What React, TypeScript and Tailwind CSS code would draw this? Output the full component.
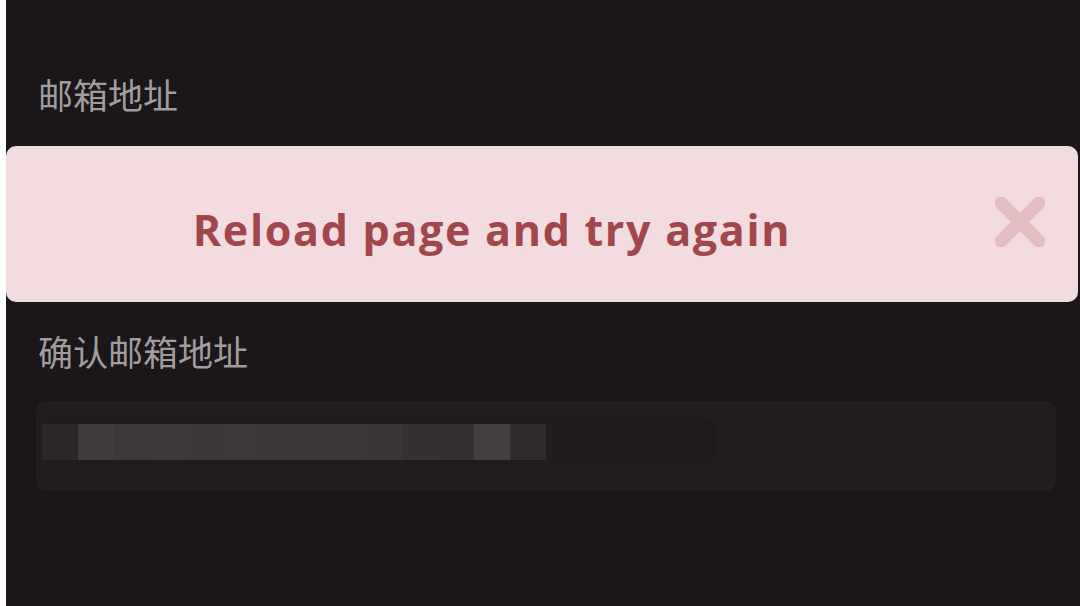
import React from 'react';

const cjk = { fontFamily: '"Noto Sans CJK SC", "Noto Sans", sans-serif' };

// pixelated (blurred) value inside the confirm field
const blocks = [
    'bg-[#2b2729]', 'bg-[#403c3e]', 'bg-[#3d393b]', 'bg-[#3e3a3c]', 'bg-[#3c383a]',
    'bg-[#3d393b]', 'bg-[#3b3739]', 'bg-[#3c383a]', 'bg-[#3b3739]', 'bg-[#3a3638]',
    'bg-[#353133]', 'bg-[#343032]', 'bg-[#444042]', 'bg-[#302c2e]',
];

export default function App() {
    return (
        <div className="w-[1080px] h-[606px] flex bg-white overflow-hidden">
            <div className="w-[6px] shrink-0 bg-white" />
            <div className="flex-1 bg-[#1a1619] flex flex-col">
                <div className="pt-[73px] pl-[32px] text-[35px] leading-[42px] text-[#a19d9f]" style={cjk}>
                    邮箱地址
                </div>

                {/* error toast */}
                <div className="mt-[31px] mr-[2px] h-[156px] rounded-[10px] bg-[#f2dcdf] flex items-center relative">
                    <div
                        className="flex-1 text-center pr-[100px] text-[43px] font-bold tracking-[1.7px] text-[#a1474b] pt-[12px]"
                        style={{ fontFamily: '"Open Sans", Lato, sans-serif' }}
                    >
                        Reload page and try again
                    </div>
                    <svg className="absolute left-[989px] top-[51px]" width="50" height="50" viewBox="0 0 50 50">
                        <path d="M6 6 L44 44 M44 6 L6 44" stroke="#e2bdc1" strokeWidth="13" strokeLinecap="round" />
                    </svg>
                </div>

                <div className="pt-[28px] pl-[32px] text-[35px] leading-[42px] text-[#a19d9f]" style={cjk}>
                    确认邮箱地址
                </div>

                <div className="mt-[29px] ml-[30px] w-[1020px] h-[90px] rounded-[10px] bg-[#221d20] relative">
                    <div className="absolute left-[6px] top-[17px] w-[674px] h-[48px] rounded-[16px] bg-[#1f1b1e]" />
                    <div className="absolute left-[6px] top-[23px] flex h-[36px]">
                        {blocks.map((c, i) => (
                            <div key={i} className={`${c} w-[36px] h-full`} />
                        ))}
                    </div>
                </div>
            </div>
        </div>
    );
}
